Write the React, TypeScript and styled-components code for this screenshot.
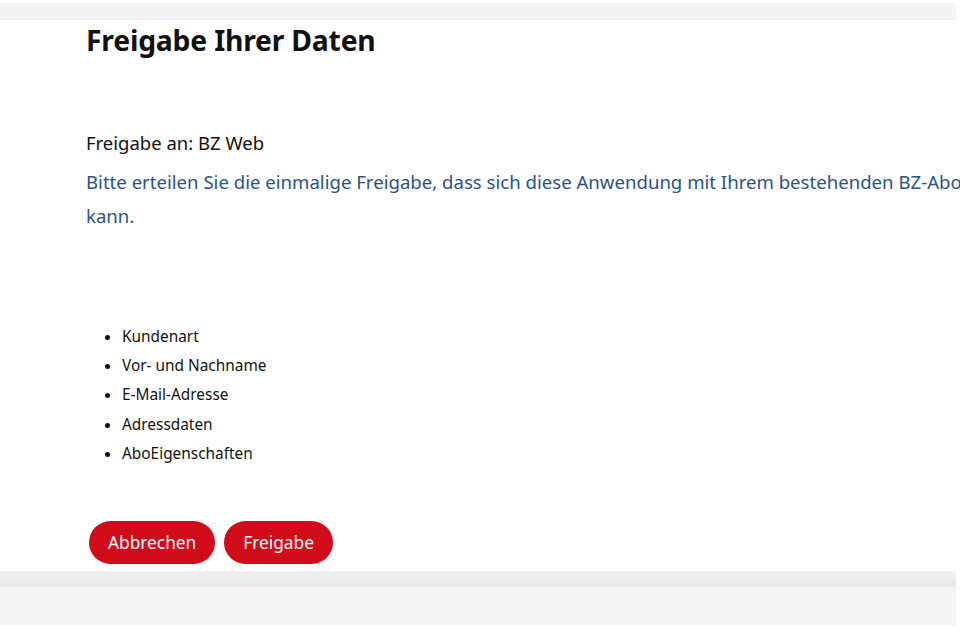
import React from "react";
import styled, { createGlobalStyle } from "styled-components";

const Global = createGlobalStyle`
  html, body { margin: 0; padding: 0; background: #fff; overflow: hidden; }
  body { font-family: "Noto Sans", sans-serif; width: 960px; height: 627px; }
`;

const Page = styled.div`
  display: flex;
  flex-direction: column;
  height: 627px;
  padding-top: 3px;
  box-sizing: border-box;
`;

const TopBar = styled.div`
  height: 16px;
  background: #f3f3f3;
  border-bottom: 1px solid #ececec;
  margin-right: 4px;
`;

const Main = styled.main`
  padding: 0 0 0 86px;
  width: 1120px;
  flex: 1;
`;

const Title = styled.h1`
  margin: 0;
  font-size: 28.3px;
  font-weight: 700;
  color: #111;
  line-height: 40px;
  letter-spacing: -0.2px;
`;

const Intro = styled.p`
  margin: 70px 0 0;
  font-size: 18.5px;
  color: #111;
  line-height: 26px;
`;

const Note = styled.p`
  margin: 9px 0 0;
  font-size: 18.6px;
  line-height: 34px;
  color: #2b5283;
  width: 990px;
`;

const List = styled.ul`
  margin: 89px 0 0;
  padding-left: 36px;
  font-size: 15.4px;
  color: #111;
  line-height: 29.2px;
`;

const Buttons = styled.div`
  display: flex;
  gap: 9px;
  margin-top: 53px;
  padding-left: 3px;
`;

const Button = styled.button`
  height: 43px;
  padding: 0 19px;
  border: none;
  border-radius: 22px;
  background: #d10b1a;
  color: #fff;
  font-family: "Noto Sans", sans-serif;
  font-size: 17.3px;
  cursor: pointer;
`;

const Footer = styled.footer`
  margin-bottom: 2px;
  margin-right: 4px;
`;

const FooterShade = styled.div`
  height: 16px;
  background: linear-gradient(#f2f2f2, #e6e6e6);
`;

const FooterBody = styled.div`
  height: 38px;
  background: #f4f4f4;
`;

export default function App() {
  return (
    <>
      <Global />
      <Page>
        <TopBar />
        <Main>
          <Title>Freigabe Ihrer Daten</Title>
          <Intro>Freigabe an: BZ Web</Intro>
          <Note>
            Bitte erteilen Sie die einmalige Freigabe, dass sich diese Anwendung mit Ihrem bestehenden BZ-Abo verbinden kann.
          </Note>
          <List>
            <li>Kundenart</li>
            <li>Vor- und Nachname</li>
            <li>E-Mail-Adresse</li>
            <li>Adressdaten</li>
            <li>AboEigenschaften</li>
          </List>
          <Buttons>
            <Button>Abbrechen</Button>
            <Button>Freigabe</Button>
          </Buttons>
        </Main>
        <Footer>
          <FooterShade />
          <FooterBody />
        </Footer>
      </Page>
    </>
  );
}
